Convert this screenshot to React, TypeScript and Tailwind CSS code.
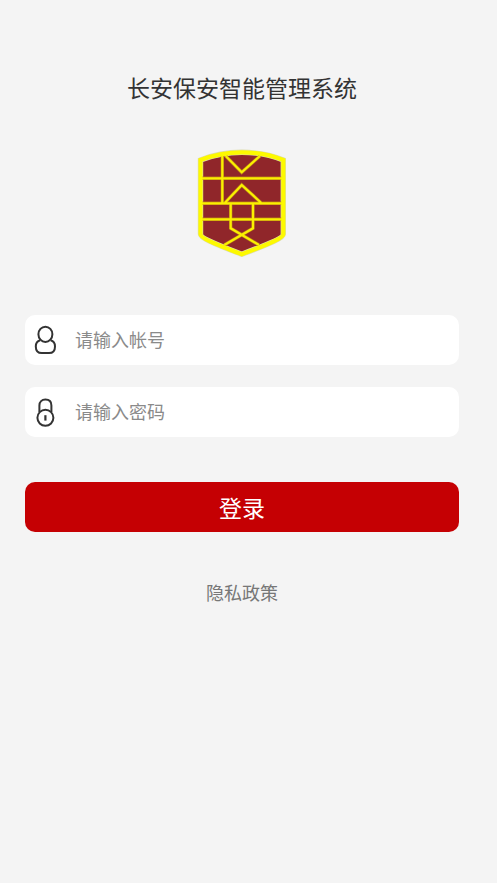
import React from 'react';

interface LoginFieldProps {
  id: string;
  label: string;
  type: string;
  icon: React.ReactNode;
}

function UserIcon() {
  return <svg width="24" height="32" viewBox="0 0 24 32" fill="none" stroke="#333333" strokeWidth="2" role="img" aria-label="帐号">
      <ellipse cx="12.4" cy="10.3" rx="7" ry="7.6" />
      <path d="M7.2 16.2C4.2 17 2.8 19.4 2.8 22.4C2.8 26.8 5 29 8.8 29H16C19.8 29 22 26.8 22 22.4C22 19.4 20.6 17 17.6 16.2" />
    </svg>;
}

function LockIcon() {
  return <svg width="24" height="32" viewBox="0 0 24 32" fill="none" stroke="#333333" strokeWidth="2" role="img" aria-label="密码">
      <path d="M6.4 16V9.4C6.4 5.8 8.8 3.6 12.4 3.6C16 3.6 18.4 5.8 18.4 9.4V16" />
      <circle cx="12.4" cy="21.8" r="8" />
      <path d="M12.4 19.2V24.6" strokeWidth="2.2" />
    </svg>;
}

function Emblem() {
  const lines = 'M25.3 7V54.3M28.7 7L44.7 23.3L63 7M5 29.3H85M5 54.3H85M5 70.3H85M28 53.7L44.7 36L64 53.7M33.7 54.3V79.3L62 96M56 54.3V79.3L27.3 96';
  const shield = 'M3.5 11Q23 3.3 44.8 3.3Q67 3.3 86.3 11V85.2C86.3 88.5 76 93.5 44.8 105.2C14 93.5 3.5 88.5 3.5 85.2Z';
  return <svg width="90" height="109" viewBox="0 0 90 109" fill="none" role="img" aria-label="长安保安">
      <path d={shield} fill="#90262a" stroke="#dcdcae" strokeWidth="5.4" />
      <path d={lines} stroke="#b57a18" strokeWidth="3.4" />
      <path d={lines} stroke="#fbf000" strokeWidth="2.2" />
      <path d={shield} stroke="#fdf900" strokeWidth="4.2" />
    </svg>;
}

function LoginField({ id, label, type, icon }: LoginFieldProps) {
  return <div className="flex h-[50px] items-center rounded-[10px] bg-white pl-2">
      <label htmlFor={id} className="shrink-0">
        {icon}
      </label>
      <input
        id={id}
        type={type}
        placeholder={label}
        className="ml-[18px] h-full min-w-0 flex-1 bg-transparent pr-4 pb-0.5 text-[18px] text-[#333333] outline-none placeholder:text-[#8a8a8a]"
      />
    </div>;
}

export default function App() {
  return <main className="flex min-h-screen flex-col bg-[#f4f4f4] pt-[71px] pr-[38px] pb-8 pl-[25px] font-['Noto_Sans_CJK_SC',sans-serif]">
      <h1 className="text-center text-[23px] leading-8 text-[#333333]">长安保安智能管理系统</h1>
      <div className="mt-[46px] flex justify-center">
        <Emblem />
      </div>
      <form className="mt-[57px] flex flex-col" onSubmit={e => e.preventDefault()}>
        <div className="flex flex-col gap-[22px]">
          <LoginField id="account" label="请输入帐号" type="text" icon={<UserIcon />} />
          <LoginField id="password" label="请输入密码" type="password" icon={<LockIcon />} />
        </div>
        <button type="submit" className="mt-[45px] h-[50px] rounded-[10px] bg-[#c50003] text-[23px] leading-8 text-white">
          登录
        </button>
      </form>
      <a href="#privacy" className="mt-12 self-center text-[18px] leading-6 text-[#777777]">隐私政策</a>
    </main>;
}
